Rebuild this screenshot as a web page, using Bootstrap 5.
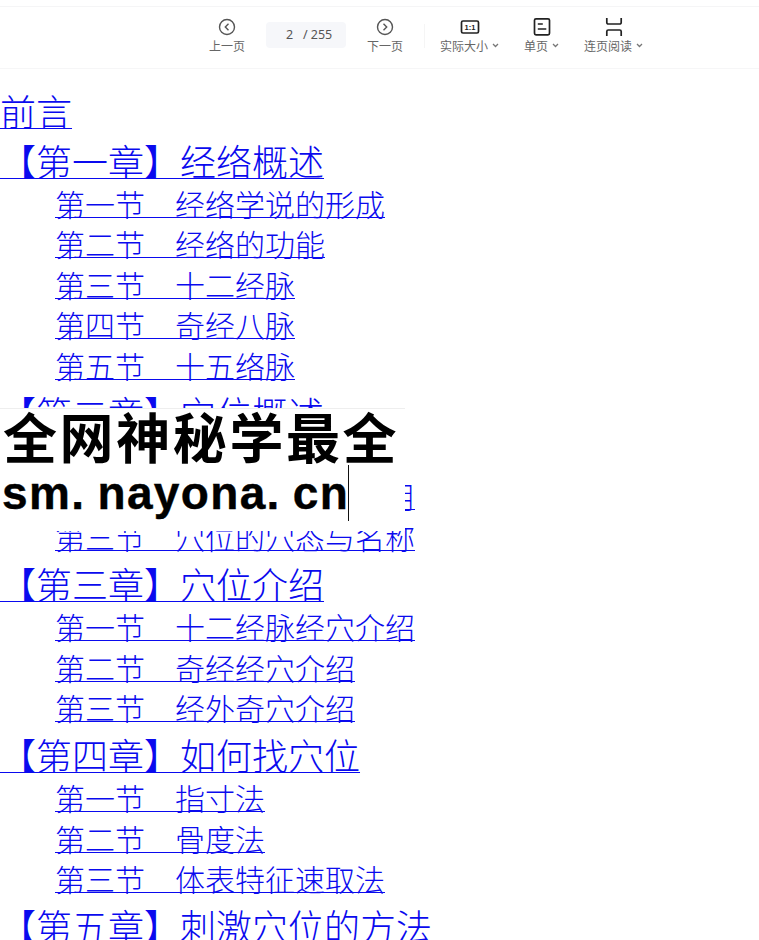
<!DOCTYPE html>
<html lang="zh-CN"><head><meta charset="utf-8">
<link href="https://cdn.jsdelivr.net/npm/bootstrap@5.3.0/dist/css/bootstrap.min.css" rel="stylesheet">
<style>
html,body{margin:0;height:100%;background:#fff;overflow:hidden}
body{position:relative;font-family:"Noto Sans CJK SC",sans-serif}
.viewer-bar{height:69px;padding-top:6px;border-bottom:1px solid #f6f6f7;background:#fff}
.viewer-bar-in{border-top:1px solid #f5f5f6;height:62px;padding-top:10px}
.tool{font:12px/14px "Noto Sans CJK SC",sans-serif;color:#666;width:max-content;flex:none;height:40px;white-space:nowrap}
.tool svg{display:block;height:20px;width:20px;margin-bottom:2px}
.caret{font-size:0;margin-left:4px}
.caret svg{display:inline;width:7px;height:5px;margin:0;vertical-align:3px}
.pager{width:80px;height:26px;margin-top:5px;background:#f6f7fa;border-radius:4px;font:12.5px/26px "Noto Sans",sans-serif;color:#555;text-align:left;padding-left:20px;flex:none}
.sep{width:1px;height:24px;margin-top:7px;background:#f5f5f5;flex:none}
.ml-prev{margin-left:209px}.ml-21{margin-left:21px}.ml-15{margin-left:15px}.ml-25{margin-left:25px}
.toc{padding-top:16px;font-family:"Noto Sans CJK SC",serif;font-weight:300}
.toc a{color:#0a0aee;text-decoration-thickness:1px;text-decoration-skip-ink:none;text-underline-offset:2px}
.chap{font-size:36px;line-height:50px;height:50px;white-space:nowrap}
.sect{font-size:30px;line-height:36.4px;height:40.4px;padding:0 0 4px 55px;white-space:nowrap}
.toc .sect a{text-underline-offset:1px}
.stamp{position:absolute;left:0;top:408px;width:405px;height:123px;background:#fff;border-top:1px solid #eee;color:#000;font-family:"Liberation Sans",sans-serif;font-weight:700;line-height:1}
.stamp-cn{font:700 54px/54px "Noto Sans CJK SC",sans-serif;padding-left:3px;height:54px;letter-spacing:2.600px;white-space:nowrap}
.stamp-en{font-size:46px;line-height:55px;padding-left:2px;margin-top:3px;white-space:nowrap;word-spacing:-2px;letter-spacing:1.350px;-webkit-text-stroke:.4px #000}
.cursor{position:absolute;left:348px;top:56px;width:1px;height:56px;background:#111}
</style></head><body>
<div class="viewer-bar"><div class="viewer-bar-in d-flex align-items-start">
<div class="tool text-center ml-prev"><svg class="mx-auto" viewBox="0 0 20 20" fill="none" stroke="#555" stroke-width="1.4"><circle cx="10" cy="10" r="7.500"/><path d="M11.500 6.800 8.300 10l3.200 3.200"/></svg>上一页</div>
<div class="pager ml-21">2 &nbsp;&nbsp;/ 255</div>
<div class="tool text-center ml-21"><svg class="mx-auto" viewBox="0 0 20 20" fill="none" stroke="#555" stroke-width="1.4"><circle cx="10" cy="10" r="7.500"/><path d="M8.500 6.800 11.700 10l-3.200 3.200"/></svg>下一页</div>
<div class="sep ml-21"></div>
<div class="tool text-center ml-15"><svg class="mx-auto" viewBox="0 0 20 20" fill="none" stroke="#222" stroke-width="1.700"><rect x="1.500" y="4" width="17" height="12" rx="1.500"/><text x="10" y="12.700" text-anchor="middle" font-family="Liberation Sans" font-weight="700" font-size="7.500" fill="#222" stroke="none">1:1</text></svg>实际大小<span class="caret"><svg viewBox="0 0 7 5" fill="none" stroke="#777" stroke-width="1.300"><path d="M1 1l2.500 2.500L6 1"/></svg></span></div>
<div class="tool text-center ml-25"><svg class="mx-auto" viewBox="0 0 20 20" fill="none" stroke="#222" stroke-width="1.700"><rect x="2.500" y="1.800" width="15" height="16" rx="1.500"/><path d="M5.800 7h5M5.800 12h8.500"/></svg>单页<span class="caret"><svg viewBox="0 0 7 5" fill="none" stroke="#777" stroke-width="1.300"><path d="M1 1l2.500 2.500L6 1"/></svg></span></div>
<div class="tool text-center ml-25"><svg class="mx-auto" viewBox="0 0 20 20" fill="none" stroke="#222" stroke-width="1.700"><path d="M2.800 1v4.500a1.500 1.500 0 0 0 1.500 1.500h11.400a1.500 1.500 0 0 0 1.500-1.500V1M2.800 19v-4.500a1.500 1.500 0 0 1 1.500-1.500h11.400a1.500 1.500 0 0 1 1.500 1.500V19"/></svg>连页阅读<span class="caret"><svg viewBox="0 0 7 5" fill="none" stroke="#777" stroke-width="1.300"><path d="M1 1l2.500 2.500L6 1"/></svg></span></div>
</div></div>
<div class="toc">
<div class="chap"><a href="#">前言</a></div>
<div class="chap"><a href="#">【第一章】经络概述</a></div>
<div class="sect"><a href="#">第一节　经络学说的形成</a></div>
<div class="sect"><a href="#">第二节　经络的功能</a></div>
<div class="sect"><a href="#">第三节　十二经脉</a></div>
<div class="sect"><a href="#">第四节　奇经八脉</a></div>
<div class="sect"><a href="#">第五节　十五络脉</a></div>
<div class="chap"><a href="#">【第二章】穴位概述</a></div>
<div class="sect"><a href="#">第一节　穴位的作用</a></div>
<div class="sect"><a href="#">第二节　穴位的分类与作用</a></div>
<div class="sect"><a href="#">第三节　穴位的穴态与名称</a></div>
<div class="chap"><a href="#">【第三章】穴位介绍</a></div>
<div class="sect"><a href="#">第一节　十二经脉经穴介绍</a></div>
<div class="sect"><a href="#">第二节　奇经经穴介绍</a></div>
<div class="sect"><a href="#">第三节　经外奇穴介绍</a></div>
<div class="chap"><a href="#">【第四章】如何找穴位</a></div>
<div class="sect"><a href="#">第一节　指寸法</a></div>
<div class="sect"><a href="#">第二节　骨度法</a></div>
<div class="sect"><a href="#">第三节　体表特征速取法</a></div>
<div class="chap"><a href="#">【第五章】刺激穴位的方法</a></div>
</div>
<div class="stamp"><div class="stamp-cn">全网神秘学最全</div><div class="stamp-en">sm. nayona. cn</div><div class="cursor"></div></div>
<script src="https://cdn.jsdelivr.net/npm/bootstrap@5.3.0/dist/js/bootstrap.bundle.min.js"></script>
</body></html>
